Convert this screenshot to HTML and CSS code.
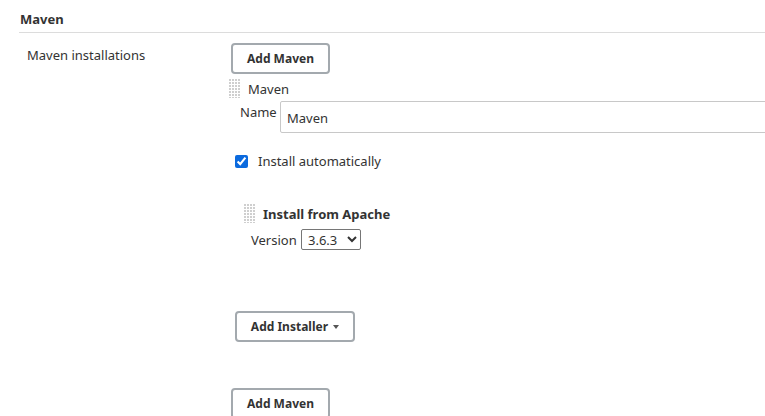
FILE: index.html
```html
<!DOCTYPE html>
<html>
<head>
<meta charset="utf-8">
<link rel="stylesheet" href="styles.css">
</head>
<body>
<div class="page">
  <div class="section-header">Maven</div>
  <div class="row">
    <div class="label">Maven installations</div>
    <div class="content">
      <button class="btn btn-add">Add Maven</button>
      <div class="repeated">
        <div class="rep-title"><span class="handle"></span><span class="rep-name">Maven</span></div>
        <div class="name-row">
          <span class="name-label">Name</span>
          <input class="text-input" type="text" value="Maven">
        </div>
        <label class="check-row">
          <input class="check" type="checkbox" checked>
          <span>Install automatically</span>
        </label>
        <div class="installer">
          <div class="inst-title"><span class="handle"></span><span class="inst-name">Install from Apache</span></div>
          <div class="version-row">
            <span class="version-label">Version</span>
            <select class="select"><option>3.6.3</option></select>
          </div>
        </div>
        <button class="btn btn-installer">Add Installer <span class="caret"></span></button>
      </div>
      <button class="btn btn-add btn-bottom">Add Maven</button>
    </div>
  </div>
</div>
</body>
</html>
```
FILE: styles.css
```css
html, body {
  margin: 0;
  padding: 0;
  background: #fff;
}
body {
  font-family: "Noto Sans", "Open Sans", sans-serif;
  font-size: 13px;
  color: #333;
  overflow: hidden;
}
.page {
  width: 765px;
  height: 416px;
  overflow: hidden;
}
.section-header {
  margin-left: 19px;
  padding: 10px 0 0 1px;
  height: 22px;
  font-weight: bold;
  font-size: 13px;
  line-height: 18px;
  border-bottom: 1px solid #dcdcdc;
}
.row {
  display: flex;
  padding-top: 10px;
}
.label {
  width: 202px;
  padding-left: 27px;
  padding-top: 3px;
  line-height: 18px;
  flex-shrink: 0;
}
.content {
  display: flex;
  flex-direction: column;
  align-items: flex-start;
  min-width: 0;
}
.btn {
  font-family: inherit;
  font-weight: bold;
  font-size: 12px;
  color: #333;
  background: #fff;
  border: 2px solid #a3a9ae;
  border-radius: 4px;
  padding: 0;
  height: 31px;
  cursor: pointer;
}
.btn-add {
  margin-left: 2px;
  width: 99px;
}
.repeated {
  display: flex;
  flex-direction: column;
  align-items: flex-start;
}
.rep-title {
  display: flex;
  align-items: center;
  margin-top: 5px;
  height: 19px;
}
.handle {
  display: inline-block;
  width: 11px;
  height: 19px;
  background-color: #cfcfcf;
  background-image: linear-gradient(to right, #fff 1px, transparent 1px), linear-gradient(to bottom, #fff 1px, transparent 1px);
  background-size: 3px 3px;
  background-position: 2px 2px;
}
.rep-name {
  margin-left: 8px;
}
.name-row {
  display: flex;
  align-items: flex-start;
  margin-top: 3px;
  margin-left: 11px;
}
.name-label {
  line-height: 18px;
  margin-top: 2px;
  width: 40px;
}
.text-input {
  font-family: inherit;
  font-size: 13px;
  color: #333;
  width: 600px;
  height: 32px;
  box-sizing: border-box;
  border: 1px solid #c8c8c8;
  border-radius: 2px;
  padding: 2px 6px 0;
  margin: 0;
}
.check-row {
  display: flex;
  align-items: center;
  margin-top: 19px;
  margin-left: 6px;
  height: 18px;
}
.check {
  margin: 0 10px 0 0;
  width: 13px;
  height: 13px;
  accent-color: #0b6ade;
}
.installer {
  margin-top: 34px;
  margin-left: 15px;
  display: flex;
  flex-direction: column;
  align-items: flex-start;
}
.inst-title {
  display: flex;
  align-items: center;
  height: 19px;
}
.inst-name {
  margin-left: 8px;
  font-weight: bold;
}
.version-row {
  display: flex;
  align-items: center;
  margin-top: 6px;
  margin-left: 7px;
}
.version-label {
  width: 50px;
}
.select {
  font-family: inherit;
  font-size: 13px;
  color: #333;
  width: 60px;
  height: 21px;
  border: 1px solid #767676;
  border-radius: 2px;
  background: #fff;
  padding: 0 2px;
  margin: 0;
}
.btn-installer {
  margin-top: 61px;
  margin-left: 6px;
  width: 120px;
}
.caret {
  display: inline-block;
  width: 0;
  height: 0;
  border-left: 3.5px solid transparent;
  border-right: 3.5px solid transparent;
  border-top: 4px solid #555;
  vertical-align: 2px;
  margin-left: 2px;
}
.btn-bottom {
  margin-top: 46px;
}
```
